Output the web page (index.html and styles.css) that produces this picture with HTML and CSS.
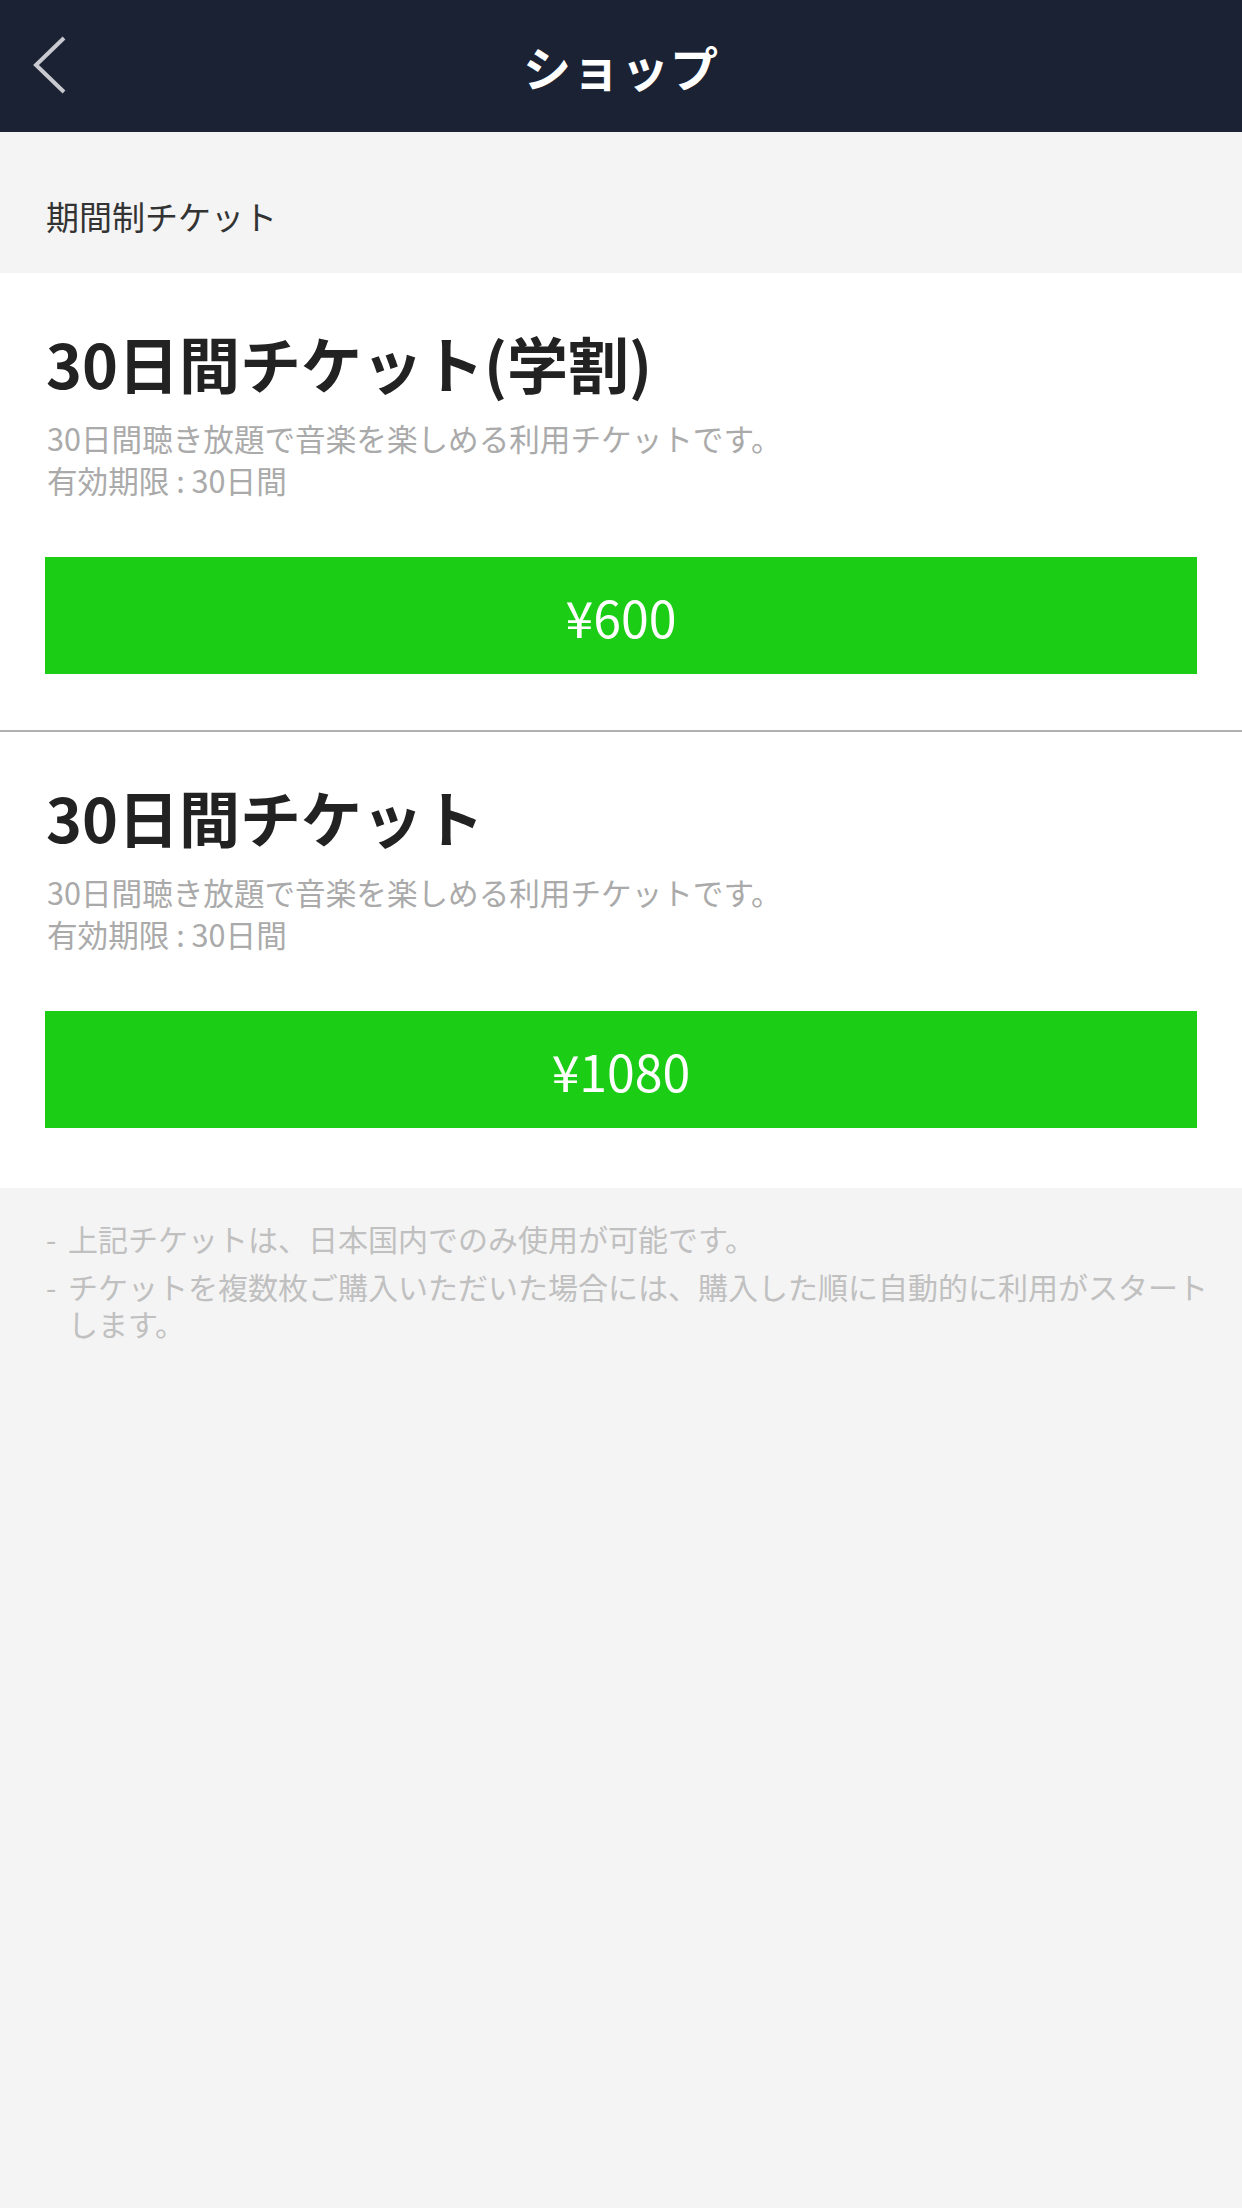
FILE: index.html
```html
<!DOCTYPE html>
<html lang="ja">
<head>
    <meta charset="UTF-8">
    <meta name="viewport" content="width=device-width, initial-scale=1.0">
    <title>ショップ</title>
    <link rel="stylesheet" href="styles.css">
</head>
<body>
    <header class="topbar">
        <a href="#" class="back" aria-label="戻る">
            <svg width="40" height="64" viewBox="0 0 40 64">
                <polyline points="32,4 4,31 32,58" fill="none" stroke="#c9cad0" stroke-width="4"/>
            </svg>
        </a>
        <h1>ショップ</h1>
        <span></span>
    </header>

    <main>
        <!-- 期間制チケット -->
        <div class="section-label">期間制チケット</div>

        <section class="ticket">
            <h2>30日間チケット(学割)</h2>
            <p class="desc">30日間聴き放題で音楽を楽しめる利用チケットです。<br>有効期限 : 30日間</p>
            <button type="button" class="buy">¥600</button>
        </section>

        <section class="ticket">
            <h2>30日間チケット</h2>
            <p class="desc">30日間聴き放題で音楽を楽しめる利用チケットです。<br>有効期限 : 30日間</p>
            <button type="button" class="buy">¥1080</button>
        </section>

        <!-- 注意事項 -->
        <ul class="notes">
            <li>上記チケットは、日本国内でのみ使用が可能です。</li>
            <li>チケットを複数枚ご購入いただいた場合には、購入した順に自動的に利用がスタートします。</li>
        </ul>
    </main>
</body>
</html>
```

FILE: styles.css
```css
/* 共通 */
* {
    margin: 0;
    padding: 0;
    box-sizing: border-box;
}

body {
    background-color: #f4f4f4;
    color: #222;
    font-family: "Noto Sans CJK JP", "Noto Sans", sans-serif;
    min-height: 2208px;
}

/* ヘッダー */
.topbar {
    height: 132px;
    background: #1b2233;
    display: grid;
    grid-template-columns: 120px 1fr 120px;
    align-items: center;
}

.back {
    display: flex;
    align-items: center;
    padding-left: 32px;
    height: 100%;
}

.topbar h1 {
    color: white;
    text-align: center;
    font-size: 48px;
    font-weight: bold;
    letter-spacing: 1px;
}

/* セクション見出し */
.section-label {
    padding: 64px 46px 37px;
    font-size: 33px;
    line-height: 40px;
    color: #333;
}

/* チケット */
.ticket {
    background: white;
    padding: 50px 45px 56px;
}

.ticket + .ticket {
    border-top: 2px solid #b0b0b0;
    padding-top: 45px;
    padding-bottom: 60px;
}

.ticket h2 {
    font-size: 61px;
    font-weight: bold;
    line-height: 80px;
    color: #222;
    padding-left: 1px;
}

.desc {
    margin-top: 14px;
    font-size: 30.6px;
    line-height: 42px;
    color: #aaa;
    padding-left: 2px;
}

.buy {
    display: block;
    width: 100%;
    height: 117px;
    margin-top: 56px;
    border: none;
    background-color: #1ccd16;
    color: white;
    font-family: "Noto Sans CJK JP", "Noto Sans", sans-serif;
    font-size: 50px;
    cursor: pointer;
}

/* 注意事項 */
.notes {
    list-style: none;
    padding: 32px 20px 0 46px;
    font-size: 30px;
    line-height: 37px;
    color: #c0c0c0;
}

.notes li {
    display: flex;
    margin-bottom: 11px;
}

.notes li::before {
    content: "-";
    width: 22px;
    flex-shrink: 0;
}
```
